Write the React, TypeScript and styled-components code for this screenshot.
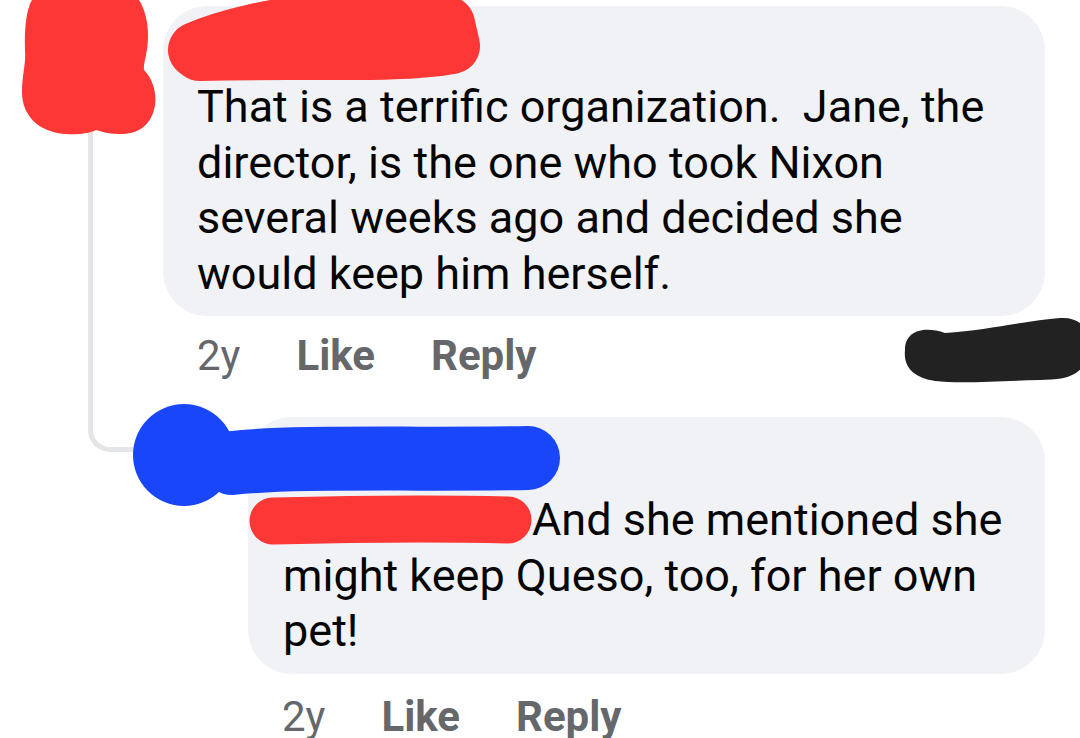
import React from "react";
import styled, { createGlobalStyle } from "styled-components";

const GlobalStyle = createGlobalStyle`
  html, body {
    margin: 0;
    padding: 0;
    background: #ffffff;
  }
  body {
    font-family: Roboto, "Noto Sans", "Liberation Sans", sans-serif;
  }
`;

const Page = styled.div`
  position: relative;
  width: 1080px;
  height: 738px;
  overflow: hidden;
  box-sizing: border-box;
  padding-top: 6px;
  background: #ffffff;
  font-family: Roboto, "Noto Sans", "Liberation Sans", sans-serif;
`;

const Connector = styled.div`
  position: absolute;
  left: 88px;
  top: 120px;
  width: 70px;
  height: 332px;
  box-sizing: border-box;
  border-left: 5px solid #e3e5e8;
  border-bottom: 5px solid #e3e5e8;
  border-bottom-left-radius: 22px;
`;

const CommentRow = styled.div<{ $indent: number; $top: number }>`
  position: relative;
  display: grid;
  grid-template-columns: ${(p) => p.$indent}px 1fr;
  padding-right: 35px;
  margin-top: ${(p) => p.$top}px;
`;

const Avatar = styled.div<{ $size: number; $left: number; $top: number }>`
  width: ${(p) => p.$size}px;
  height: ${(p) => p.$size}px;
  border-radius: 50%;
  background: #c9ccd1;
  margin-left: ${(p) => p.$left}px;
  margin-top: ${(p) => p.$top}px;
`;

const Body = styled.div`
  display: flex;
  flex-direction: column;
`;

const Bubble = styled.div<{ $padLeft: number }>`
  background: #f0f2f5;
  border-radius: 44px;
  padding: 0 20px 15px ${(p) => p.$padLeft}px;
`;

const NameRow = styled.div`
  height: 73px;
`;

const Text = styled.div`
  font-size: 45px;
  line-height: 55.5px;
  color: #050505;
  white-space: pre;
  letter-spacing: 0;
`;

const Mention = styled.span`
  display: inline-block;
  width: 249px;
  height: 1em;
`;

const MetaRow = styled.div<{ $padLeft: number; $offset: number }>`
  display: flex;
  gap: 56px;
  padding-left: ${(p) => p.$padLeft}px;
  margin-top: ${(p) => p.$offset}px;
  font-size: 42px;
  line-height: 40px;
  color: #65676b;
`;

const Time = styled.span`
  font-weight: 400;
`;

const Action = styled.span`
  font-weight: 700;
`;

const Redactions = styled.svg`
  position: absolute;
  left: 0;
  top: 0;
  width: 1080px;
  height: 738px;
  pointer-events: none;
`;

export default function App() {
  return (
    <>
      <GlobalStyle />
      <Page>
        <Connector />
        <CommentRow $indent={163} $top={0}>
          <Avatar $size={100} $left={40} $top={11} />
          <Body>
            <Bubble $padLeft={34}>
              <NameRow aria-label="author name (redacted)" />
              <Text>
                That is a terrific organization.  Jane, the
                <br />
                director, is the one who took Nixon
                <br />
                several weeks ago and decided she
                <br />
                would keep him herself.
              </Text>
            </Bubble>
            <MetaRow $padLeft={34} $offset={20}>
              <Time>2y</Time>
              <Action>Like</Action>
              <Action>Reply</Action>
            </MetaRow>
          </Body>
        </CommentRow>
        <CommentRow $indent={248} $top={41}>
          <Avatar $size={90} $left={139} $top={-8} />
          <Body>
            <Bubble $padLeft={35}>
              <NameRow aria-label="author name (redacted)" />
              <Text>
                <Mention aria-label="tagged name (redacted)" />
                And she mentioned she
                <br />
                might keep Queso, too, for her own
                <br />
                pet!
              </Text>
            </Bubble>
            <MetaRow $padLeft={34} $offset={23}>
              <Time>2y</Time>
              <Action>Like</Action>
              <Action>Reply</Action>
            </MetaRow>
          </Body>
        </CommentRow>

        <Redactions viewBox="0 0 1080 738" aria-hidden="true">
          {/* red avatar scribble */}
          <path
            d="M 45 -10 L 125 -10 C 140 -8, 148 15, 148 35 C 148 55, 143 62, 144 70 C 152 78, 157 92, 155 105 C 152 125, 138 135, 118 134 C 108 134, 100 131, 96 130 C 90 133, 80 135, 65 134 C 38 132, 22 115, 22 92 C 22 75, 26 65, 25 50 C 24 20, 28 -8, 45 -10 Z"
            fill="#fd3636"
          />
          {/* red name scribble, comment 1 */}
          <path
            d="M 196 50 C 260 22, 390 8, 447 24 L 452 46 C 400 56, 300 50, 200 53 Z"
            fill="#fd3636"
            stroke="#fd3636"
            strokeWidth="56"
            strokeLinejoin="round"
          />
          {/* black scribble */}
          <path
            d="M 905 350 C 905 330, 925 326, 945 333 C 990 330, 1030 320, 1060 318 C 1088 316, 1092 340, 1086 360 C 1080 378, 1060 380, 1040 380 C 1000 381, 960 384, 935 381 C 915 378, 903 368, 905 350 Z"
            fill="#222222"
          />
          {/* blue scribble, comment 2 */}
          <circle cx="184" cy="455" r="51" fill="#1a46fa" />
          <path
            d="M 232 463 C 300 456, 400 460, 528 458"
            fill="none"
            stroke="#1a46fa"
            strokeWidth="64"
            strokeLinecap="round"
          />
          {/* red mention scribble */}
          <path
            d="M 273 521 C 350 519, 430 518, 508 520"
            fill="none"
            stroke="#fd3636"
            strokeWidth="47"
            strokeLinecap="round"
          />
        </Redactions>
      </Page>
    </>
  );
}
